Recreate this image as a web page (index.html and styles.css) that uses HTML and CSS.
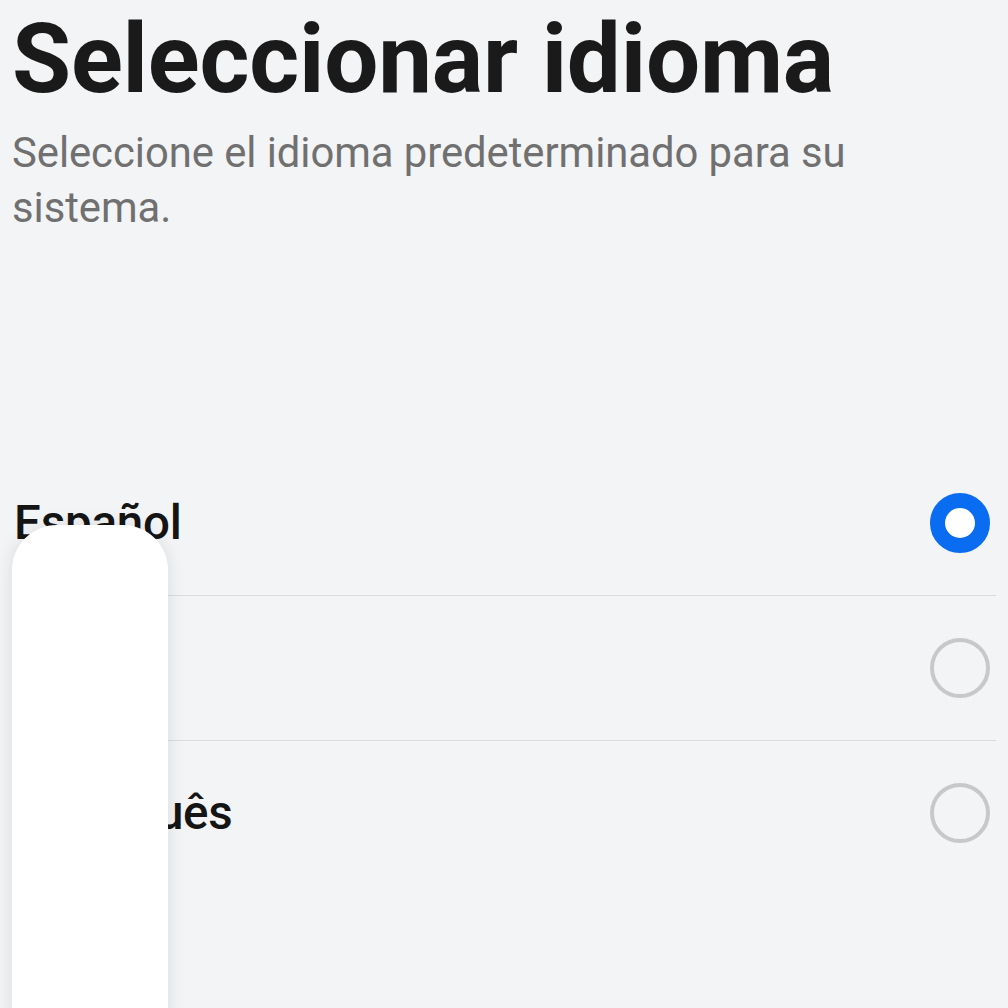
FILE: index.html
```html
<!DOCTYPE html>
<html lang="es">
<head>
<meta charset="utf-8">
<title>Seleccionar idioma</title>
<link rel="stylesheet" href="styles.css">
</head>
<body>
<main class="screen">
  <h1 class="title">Seleccionar idioma</h1>
  <p class="subtitle">Seleccione el idioma predeterminado para su sistema.</p>
  <ul class="lang-list">
    <li class="lang-row">
      <span class="lang-name">Español</span>
      <span class="radio radio-on"></span>
    </li>
    <li class="lang-row">
      <span class="lang-name">English</span>
      <span class="radio"></span>
    </li>
    <li class="lang-row">
      <span class="lang-name">Português</span>
      <span class="radio"></span>
    </li>
  </ul>
  <div class="float-card"></div>
</main>
</body>
</html>
```

FILE: styles.css
```css
html, body {
  margin: 0;
  padding: 0;
  background: #f3f4f6;
}
body {
  font-family: Roboto, "Noto Sans", sans-serif;
  width: 1008px;
  height: 1008px;
  overflow: hidden;
}
.screen {
  position: relative;
  padding: 0 12px;
  height: 1008px;
  box-sizing: border-box;
}
.title {
  margin: 0;
  font-size: 96px;
  line-height: 118px;
  font-weight: 700;
  color: #1a1a1a;
  letter-spacing: -0.2px;
}
.subtitle {
  margin: 7px 0 0;
  font-size: 41.8px;
  line-height: 55px;
  font-weight: 400;
  color: #707070;
  letter-spacing: -0.05px;
}
.lang-list {
  list-style: none;
  margin: 216px 0 0;
  padding: 0;
}
.lang-row {
  display: flex;
  align-items: center;
  justify-content: space-between;
  height: 144px;
  border-bottom: 1px solid #dadbdd;
}
.lang-row:last-child {
  border-bottom: none;
}
.lang-name {
  font-size: 47.5px;
  font-weight: 500;
  color: #151515;
  padding-left: 2px;
  letter-spacing: -0.2px;
}
.radio {
  width: 60px;
  height: 60px;
  box-sizing: border-box;
  border-radius: 50%;
  border: 4px solid #c8c8c8;
  margin-right: 6px;
}
.radio-on {
  border: 15.5px solid #0a6cf0;
  background: #ffffff;
}
.float-card {
  position: absolute;
  left: 12px;
  top: 525px;
  width: 156px;
  height: 520px;
  background: #ffffff;
  border-radius: 45px 45px 0 0;
  box-shadow: 0 0 18px rgba(0, 0, 0, 0.10);
}
```
